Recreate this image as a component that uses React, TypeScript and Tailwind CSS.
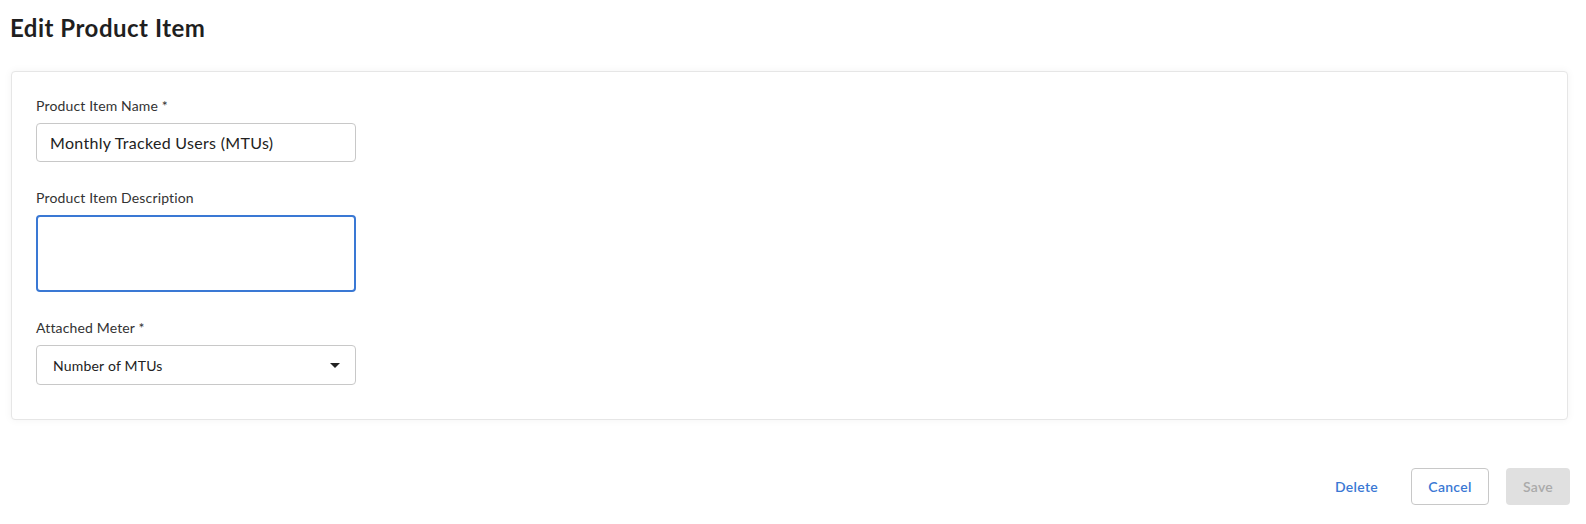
const Field = ({ label, children }: { label: string; children: React.ReactNode }) => {
  return (
    <div className="flex flex-col">
      <label className="text-[14px] leading-5 tracking-[0.15px] text-[#333]">{label}</label>
      <div className="mt-[7px]">{children}</div>
    </div>
  );
};

export default function App() {
  return (
    <div className="min-h-[524px] bg-white font-['Lato','Noto_Sans',sans-serif] text-[#222]">
      <h1 className="pl-[10px] pt-[12px] text-[24px] leading-8 font-bold tracking-[0.5px] text-[#1f1f1f]">
        Edit Product Item
      </h1>
      <div className="ml-[11px] mr-[18px] mt-[27px] rounded border border-[#e6e6e6] bg-white px-[24px] pt-[24px] pb-[34px] shadow-[0_0_8px_rgba(0,0,0,0.05)]">
        <div className="flex w-[320px] flex-col gap-[26px]">
          <Field label="Product Item Name *">
            <input
              className="h-[39px] w-full rounded border border-[#c8c8c8] px-[13px] text-[16px] tracking-[0.3px] text-[#222] outline-none"
              defaultValue="Monthly Tracked Users (MTUs)"
            />
          </Field>
          <Field label="Product Item Description">
            <textarea className="block h-[77px] w-full resize-none rounded border-2 border-[#3a78d4] px-[12px] py-2 text-[16px] outline-none" />
          </Field>
          <Field label="Attached Meter *">
            <div className="flex h-[40px] w-full items-center justify-between rounded border border-[#c8c8c8] pl-[16px] pr-[15px]">
              <span className="text-[14px] tracking-[0.2px] text-[#222]">Number of MTUs</span>
              <svg width="10" height="5" viewBox="0 0 10 5">
                <path d="M0 0 L10 0 L5 5 Z" fill="#222" />
              </svg>
            </div>
          </Field>
        </div>
      </div>
      <div className="mr-[16px] mt-[48px] flex items-center justify-end gap-[17px]">
        <button className="px-[16px] text-[14px] font-semibold tracking-[0.3px] text-[#3a78d4]">Delete</button>
        <button className="h-[37px] w-[78px] rounded border border-[#c8c8c8] text-[14px] font-semibold tracking-[0.3px] text-[#3a78d4]">
          Cancel
        </button>
        <button className="h-[37px] w-[64px] rounded bg-[#e0e0e0] text-[14px] font-semibold tracking-[0.3px] text-[#aaaaaa]">
          Save
        </button>
      </div>
    </div>
  );
}
